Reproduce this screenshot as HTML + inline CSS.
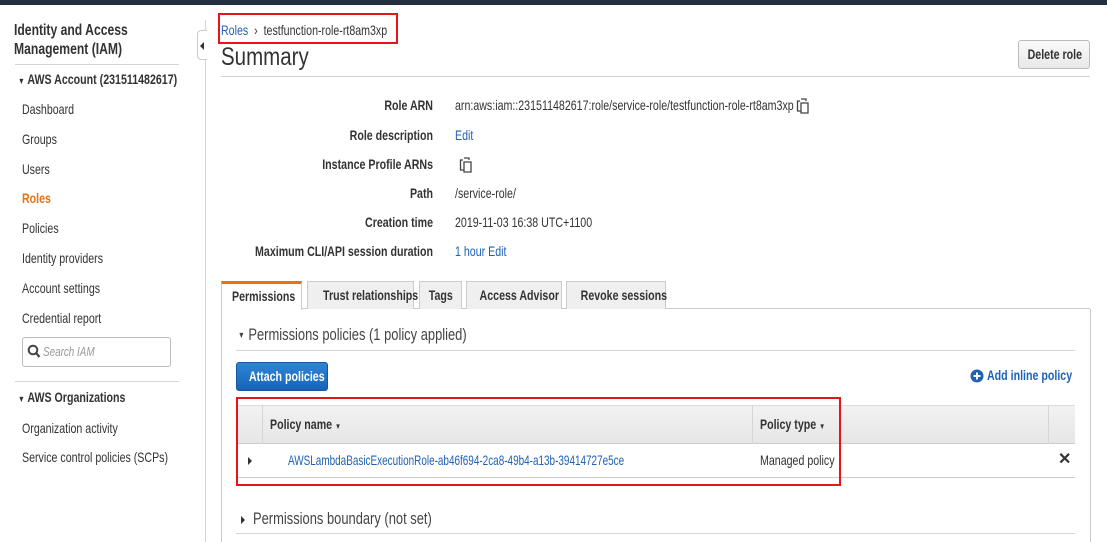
<!DOCTYPE html>
<html><head><meta charset="utf-8"><style>
*{margin:0;padding:0;box-sizing:border-box}
body{width:1107px;height:542px;overflow:hidden;background:#fff;position:relative;font-family:"Liberation Sans",sans-serif;color:#333;font-size:14px}
.a{position:absolute;white-space:nowrap;line-height:16px;transform:scaleX(.76);transform-origin:0 0}
.b{font-weight:bold}
.l{color:#1e62b5}
.r{text-align:right;width:300px;transform-origin:100% 0}
.h{position:absolute;height:1px;background:#d5d5d5}
.v{position:absolute;width:1px;background:#d5d5d5}
.tab{position:absolute;top:281px;height:28px;border:1px solid #ccc;border-bottom:none;background:#efefef;font-weight:bold;font-size:14px;line-height:26px;text-align:center;color:#333;white-space:nowrap}
.c{display:inline-block;transform:scaleX(.76);transform-origin:50% 50%;white-space:nowrap}
</style></head><body>
<div style="position:absolute;left:0;top:0;width:1107px;height:5px;background:#232f3e"></div>

<div class="a b" style="left:14px;top:21px;font-size:16px;line-height:19px;color:#333;transform:scaleX(.76)">Identity and Access<br>Management (IAM)</div>
<div class="h" style="left:15px;top:64px;width:164px"></div>
<div class="a b" style="left:18px;top:71px"><span style="font-size:9px">▼</span> AWS Account (231511482617)</div>
<div class="a" style="left:22px;top:101px">Dashboard</div>
<div class="a" style="left:22px;top:131px">Groups</div>
<div class="a" style="left:22px;top:161px">Users</div>
<div class="a b" style="left:22px;top:190px;color:#ec7211">Roles</div>
<div class="a" style="left:22px;top:220px">Policies</div>
<div class="a" style="left:22px;top:250px">Identity providers</div>
<div class="a" style="left:22px;top:280px">Account settings</div>
<div class="a" style="left:22px;top:310px">Credential report</div>
<div style="position:absolute;left:22px;top:337px;width:149px;height:30px;border:1px solid #bbb;border-radius:3px"></div>
<svg style="position:absolute;left:27px;top:344px" width="14" height="15" viewBox="0 0 14 15"><circle cx="6" cy="6" r="4.3" fill="none" stroke="#444" stroke-width="2"/><path d="M9 9l3.5 4" stroke="#444" stroke-width="2.2"/></svg>
<div class="a" style="left:43px;top:344px;font-style:italic;color:#999;font-size:13px">Search IAM</div>
<div class="h" style="left:15px;top:381px;width:164px"></div>
<div class="a b" style="left:18px;top:389px"><span style="font-size:9px">▼</span> AWS Organizations</div>
<div class="a" style="left:22px;top:420px">Organization activity</div>
<div class="a" style="left:22px;top:449px">Service control policies (SCPs)</div>

<div class="v" style="left:205px;top:20px;height:522px"></div>
<div style="position:absolute;left:197px;top:30px;width:10px;height:30px;background:#fff;border:1px solid #ccc;border-right:none;border-radius:4px 0 0 4px"></div>
<div style="position:absolute;left:200px;top:42px;width:0;height:0;border-top:4px solid transparent;border-bottom:4px solid transparent;border-right:4px solid #333"></div>

<div class="a" style="left:221px;top:22px"><span class="l">Roles</span> &nbsp;›&nbsp; testfunction-role-rt8am3xp</div>
<div style="position:absolute;left:218px;top:13px;width:180px;height:31px;border:2px solid #e8141b"></div>
<div class="a" style="left:221px;top:43px;font-size:25px;line-height:28px;color:#333;transform:scaleX(.82)">Summary</div>
<div class="h" style="left:221px;top:76px;width:869px"></div>
<div style="position:absolute;left:1018px;top:40px;width:72px;height:29px;border:1px solid #bbb;border-radius:3px;background:linear-gradient(#fafafa,#e8e8e8);font-weight:bold;text-align:center;line-height:27px;white-space:nowrap"><span class="c">Delete role</span></div>

<div class="a b r" style="left:133px;top:97px">Role ARN</div>
<div class="a b r" style="left:133px;top:127px">Role description</div>
<div class="a b r" style="left:133px;top:156px">Instance Profile ARNs</div>
<div class="a b r" style="left:133px;top:185px">Path</div>
<div class="a b r" style="left:133px;top:214px">Creation time</div>
<div class="a b r" style="left:133px;top:243px">Maximum CLI/API session duration</div>
<div class="a" style="left:455px;top:97px">arn:aws:iam::231511482617:role/service-role/testfunction-role-rt8am3xp</div>
<svg style="position:absolute;left:796px;top:98px" width="14" height="16" viewBox="0 0 14 16"><path d="M4 3h-2.5v10h3M5 1h5l0 2M6 5h6v10h-7v-10z" fill="none" stroke="#444" stroke-width="1.3"/></svg>
<svg style="position:absolute;left:459px;top:157px" width="14" height="16" viewBox="0 0 14 16"><path d="M4 3h-2.5v10h3M5 1h5l0 2M6 5h6v10h-7v-10z" fill="none" stroke="#444" stroke-width="1.3"/></svg>
<div class="a l" style="left:455px;top:127px">Edit</div>
<div class="a" style="left:455px;top:185px">/service-role/</div>
<div class="a" style="left:455px;top:214px">2019-11-03 16:38 UTC+1100</div>
<div class="a l" style="left:455px;top:243px">1 hour Edit</div>

<div class="h" style="left:221px;top:308px;width:869px;background:#ccc"></div>
<div class="tab" style="left:221px;width:81px;background:#fff;height:29px;border-top:3px solid #ec7211;line-height:24px"><span class="c">Permissions</span></div>
<div class="tab" style="left:307px;width:107px"><span class="c">Trust relationships</span></div>
<div class="tab" style="left:419px;width:43px"><span class="c">Tags</span></div>
<div class="tab" style="left:466px;width:96px"><span class="c">Access Advisor</span></div>
<div class="tab" style="left:566px;width:100px"><span class="c">Revoke sessions</span></div>
<div class="v" style="left:221px;top:309px;height:233px;background:#ccc"></div>
<div class="v" style="left:1090px;top:309px;height:233px;background:#ccc"></div>

<div class="a" style="left:238px;top:326px;font-size:17px;line-height:18px;color:#444"><span style="font-size:9px;vertical-align:2px">▼</span> Permissions policies (1 policy applied)</div>
<div class="h" style="left:236px;top:350px;width:839px"></div>
<div style="position:absolute;left:236px;top:362px;width:92px;height:29px;border:1px solid #15589e;border-radius:3px;background:linear-gradient(#2f84d6,#1664b8);color:#fff;font-weight:bold;text-align:center;line-height:27px;white-space:nowrap"><span class="c">Attach policies</span></div>
<svg style="position:absolute;left:970px;top:369px" width="14" height="14" viewBox="0 0 14 14"><circle cx="7" cy="7" r="6.5" fill="#1e62b5"/><path d="M7 3.5v7M3.5 7h7" stroke="#fff" stroke-width="2"/></svg>
<div class="a b l" style="left:987px;top:367px">Add inline policy</div>

<div style="position:absolute;left:238px;top:405px;width:837px;height:39px;background:linear-gradient(#f2f2f2,#e6e6e6);border-top:1px solid #ddd;border-bottom:1px solid #ccc"></div>
<div class="v" style="left:262px;top:405px;height:39px"></div>
<div class="v" style="left:752px;top:405px;height:39px"></div>
<div class="v" style="left:1048px;top:405px;height:39px"></div>
<div class="a b" style="left:270px;top:416px">Policy name <span style="font-size:8px">▼</span></div>
<div class="a b" style="left:760px;top:416px">Policy type <span style="font-size:8px">▼</span></div>
<div style="position:absolute;left:248px;top:457px;width:0;height:0;border-top:4px solid transparent;border-bottom:4px solid transparent;border-left:4px solid #333"></div>
<div class="a l" style="left:288px;top:452px;transform:scaleX(.71)">AWSLambdaBasicExecutionRole-ab46f694-2ca8-49b4-a13b-39414727e5ce</div>
<div class="a" style="left:760px;top:452px">Managed policy</div>
<div class="a b" style="left:1058px;top:452px;font-size:16px;transform:none">✕</div>
<div class="h" style="left:238px;top:477px;width:837px;background:#ccc"></div>
<div style="position:absolute;left:236px;top:397px;width:605px;height:89px;border:2px solid #e8141b"></div>

<div style="position:absolute;left:241px;top:516px;width:0;height:0;border-top:4px solid transparent;border-bottom:4px solid transparent;border-left:4px solid #333"></div>
<div class="a" style="left:253px;top:510px;font-size:17px;line-height:18px;color:#444">Permissions boundary (not set)</div>
<div class="h" style="left:236px;top:533px;width:839px"></div>
</body></html>
